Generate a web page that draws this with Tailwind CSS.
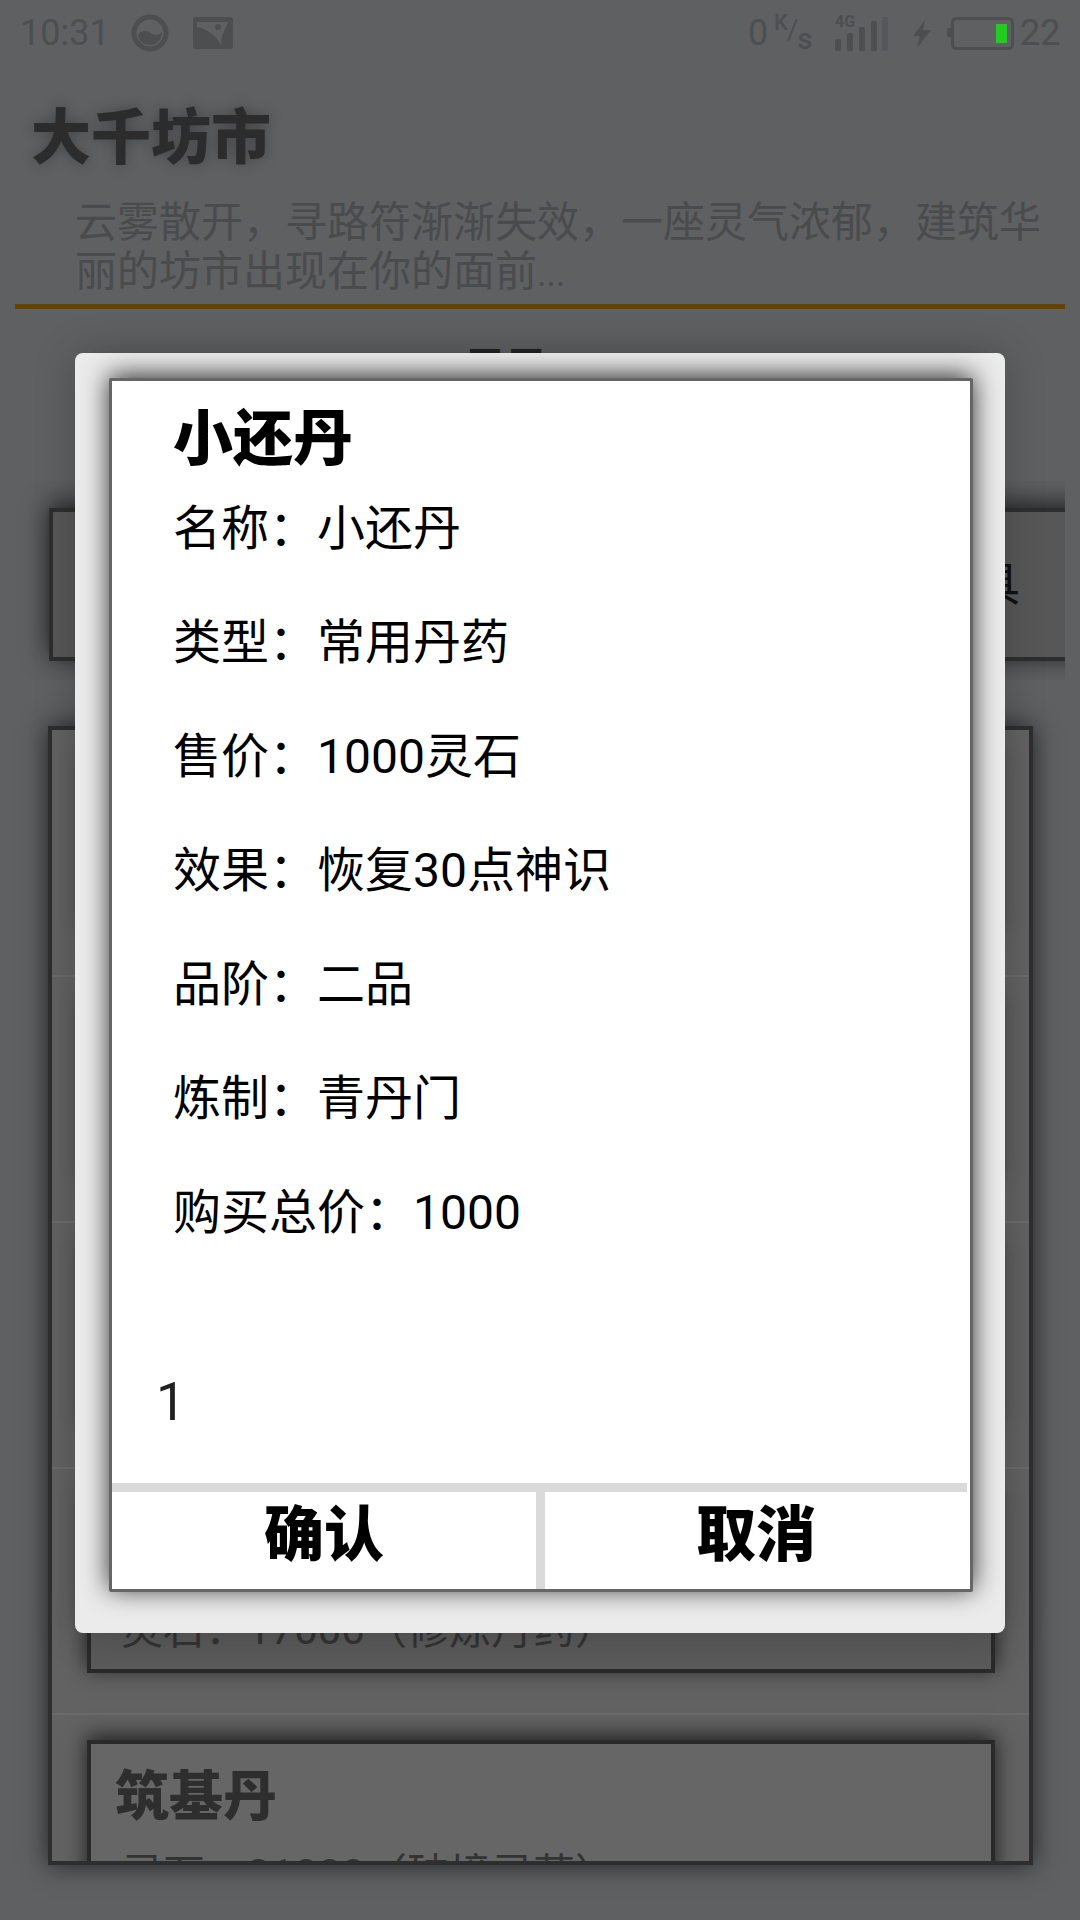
<!DOCTYPE html>
<html lang="zh-CN">
<head>
    <meta charset="UTF-8">
    <meta name="viewport" content="width=device-width, initial-scale=1.0">
    <title>大千坊市</title>
    <script src="https://cdn.jsdelivr.net/npm/@tailwindcss/browser@4"></script>
</head>
<body class="bg-[#5f6062]">
<div class="relative w-[1080px] h-[1920px] overflow-hidden bg-[#5f6062] font-['Roboto','Noto_Sans_CJK_SC',sans-serif]">

    <!-- status bar -->
    <div class="flex items-center h-[66px] pl-[20px] text-[#4d4e50] text-[36px] leading-[66px]">
        <span class="w-[111px]">10:31</span>
        <svg class="w-[40px] h-[40px]" viewBox="0 0 40 40">
            <circle cx="19" cy="20" r="16" fill="none" stroke="#4d4e50" stroke-width="5"/>
            <path d="M7 22C11 16 17 18 21 21C25 23 28 22 31 19C31 27 26 32 19 32C12 32 8 28 7 22Z" fill="#4d4e50"/>
        </svg>
        <svg class="w-[40px] h-[32px] ml-[22px]" viewBox="0 0 40 32">
            <rect width="40" height="32" rx="3" fill="#4d4e50"/>
            <path d="M4 5H35L29 19L28 28C24 20 17 13 4 10Z" fill="#5f6062"/>
            <circle cx="25" cy="10" r="3" fill="#4d4e50"/>
        </svg>
        <span class="ml-[515px] w-[26px]">0</span>
        <span class="flex items-start h-[40px] w-[61px] leading-none">
            <span class="text-[22px] font-medium -mt-[1px]">K</span>
            <span class="text-[28px] mt-[3px] -ml-[1px]">/</span>
            <span class="text-[29px] font-medium mt-[12px] -ml-[1px]">s</span>
        </span>
        <span class="relative w-[76px] h-[34px] mt-[2px]">
            <span class="absolute left-0 -top-[2px] text-[16px] leading-[13px] font-bold">4G</span>
            <svg class="w-[60px] h-[34px]" viewBox="0 0 60 34">
                <rect x="0" y="22" width="6" height="12" rx="2" fill="#4d4e50"/>
                <rect x="12" y="16" width="6" height="18" rx="1.5" fill="#4d4e50"/>
                <rect x="24" y="10" width="6" height="24" rx="1.5" fill="#4d4e50"/>
                <rect x="36" y="4" width="6" height="30" rx="1.5" fill="#4d4e50"/>
                <rect x="47" y="0" width="6" height="34" rx="1.5" fill="#56575a"/>
            </svg>
        </span>
        <svg class="w-[22px] h-[28px] mt-[1px]" viewBox="0 0 20 28">
            <path d="M13 0L1 16H8L5 28L19 10H11Z" fill="#4d4e50"/>
        </svg>
        <svg class="w-[68px] h-[33px] ml-[14px]" viewBox="0 0 68 33">
            <rect x="0" y="11" width="5" height="9" rx="1.5" fill="#4d4e50"/>
            <rect x="5.5" y="1.5" width="60" height="30" rx="4" fill="none" stroke="#4d4e50" stroke-width="3"/>
            <rect x="49" y="7" width="11" height="19" fill="#22cc22"/>
        </svg>
        <span class="ml-[5px]">22</span>
    </div>

    <!-- header -->
    <h1 class="mt-[38px] ml-[31px] text-[60px] leading-[70px] font-black text-[#2c2c2c] [text-shadow:0_0_14px_rgba(0,0,0,0.3)]">大千坊市</h1>
    <p class="mt-[24px] pl-[75px] pr-[30px] h-[98px] text-[42px] leading-[49px] text-[#4a4b4d]">云雾散开，寻路符渐渐失效，一座灵气浓郁，建筑华丽的坊市出现在你的面前<span class="text-[36px] leading-none">...</span></p>
    <div class="mt-[8px] mx-[15px] h-[5px] bg-[#654300]"></div>

    <h2 class="mt-[35px] pl-[464px] text-[42px] leading-[50px] font-bold text-[#222]">目录</h2>

    <!-- tabs, scrolled sideways -->
    <div class="mt-[87px] ml-[15px] w-[1050px] h-[199px] overflow-hidden">
        <div class="flex items-center justify-end mt-[27px] ml-[34px] w-[1120px] h-[153px] pr-[145px] bg-[#575757] border-[4px] border-[#2e2e2e] shadow-[0_-4px_24px_rgba(0,0,0,0.7)] text-[46px] text-[#111]">
            <span>丹药</span>
            <span class="ml-[60px]">道具</span>
        </div>
    </div>

    <!-- goods list -->
    <div class="mt-[46px] ml-[48px] w-[985px] h-[1139px] overflow-hidden bg-[#626262] border-[4px] border-[#2e2e2e] shadow-[0_0_24px_rgba(0,0,0,0.65)]">
        <div class="h-[247px] border-b-2 border-[#6b6b6b] pt-[26px] pl-[35px] pr-[34px]">
            <div class="h-[175px] bg-[#666] border-[4px] border-[#2a2a2a] shadow-[0_-4px_20px_rgba(0,0,0,0.7)]"></div>
        </div>
        <div class="h-[246px] border-b-2 border-[#6b6b6b] pt-[26px] pl-[35px] pr-[34px]">
            <div class="h-[175px] bg-[#666] border-[4px] border-[#2a2a2a] shadow-[0_-4px_20px_rgba(0,0,0,0.7)]"></div>
        </div>
        <div class="h-[246px] border-b-2 border-[#6b6b6b] pt-[26px] pl-[35px] pr-[34px]">
            <div class="h-[175px] bg-[#666] border-[4px] border-[#2a2a2a] shadow-[0_-4px_20px_rgba(0,0,0,0.7)]"></div>
        </div>
        <div class="h-[246px] border-b-2 border-[#6b6b6b] pt-[26px] pl-[35px] pr-[34px]">
            <div class="h-[178px] pt-[24px] pl-[24px] bg-[#5a5a5a] border-[4px] border-[#2a2a2a] shadow-[0_-4px_20px_rgba(0,0,0,0.7)]">
                <div class="text-[54px] leading-[60px] font-black text-[#2e2e2e]">回春丹</div>
                <div class="mt-[22px] pl-[6px] text-[42px] leading-[50px] text-[#333]">灵石：17000（修炼丹药）</div>
            </div>
        </div>
        <div class="pt-[25px] pl-[35px] pr-[34px]">
            <div class="h-[175px] pt-[24px] pl-[24px] bg-[#666] border-[4px] border-[#2a2a2a] shadow-[0_-4px_20px_rgba(0,0,0,0.7)]">
                <div class="text-[54px] leading-[60px] font-black text-[#2e2e2e]">筑基丹</div>
                <div class="mt-[22px] pl-[6px] text-[42px] leading-[50px] text-[#333]">灵石：31000（破境灵药）</div>
            </div>
        </div>
    </div>

    <!-- buy dialog -->
    <div class="absolute left-[75px] top-[353px] w-[930px] h-[1280px] pt-[25px] pl-[34px] bg-[#ebebeb] rounded-lg shadow-[0_0_40px_rgba(0,0,0,0.22)]">
        <div class="flex flex-col w-[864px] h-[1214px] bg-white border-[3px] border-[#666] rounded-[2px] shadow-[0_-3px_26px_rgba(0,0,0,0.8)] text-black">
            <div class="pt-[29px] mb-[2px] pl-[61px] text-[60px] leading-[60px] font-black">小还丹</div>
            <div class="pl-[61px] text-[48px] leading-[114px]">
                <div>名称：小还丹</div>
                <div>类型：常用丹药</div>
                <div>售价：1000灵石</div>
                <div>效果：恢复30点神识</div>
                <div>品阶：二品</div>
                <div>炼制：青丹门</div>
                <div>购买总价：1000</div>
            </div>
            <div class="flex flex-1 items-center pl-[44px] pt-[52px] text-[53px] text-[#222]">1</div>
            <div class="h-[9px] mr-[3px] bg-[#dadada]"></div>
            <div class="flex h-[97px] text-[60px] leading-[88px] font-black">
                <div class="w-[424px] text-center">确认</div>
                <div class="w-[9px] bg-[#dadada]"></div>
                <div class="flex-1 pr-[3px] text-center">取消</div>
            </div>
        </div>
    </div>
</div>
</body>
</html>
